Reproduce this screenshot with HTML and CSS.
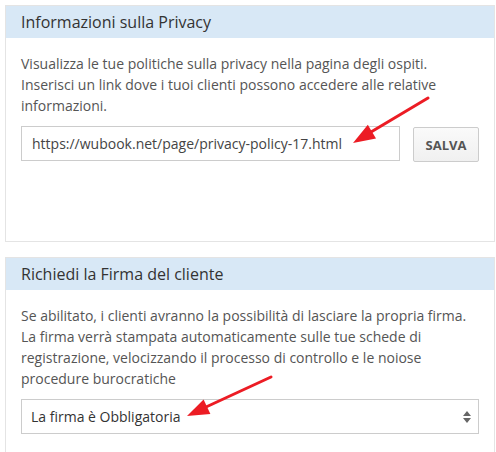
FILE: index.html
```
<!DOCTYPE html>
<html lang="it">

<head>
    <meta charset="UTF-8">
    <title>Impostazioni ospiti</title>
    <link rel="stylesheet" href="styles.css">
</head>

<body>
    <div class="page">
        <section class="panel panel-privacy">
            <h2 class="panel-title">Informazioni sulla Privacy</h2>
            <div class="panel-body">
                <p>Visualizza le tue politiche sulla privacy nella pagina degli ospiti. Inserisci un link dove i tuoi clienti possono accedere alle relative informazioni.</p>
                <div class="input-row">
                    <input class="field" type="text" value="https://wubook.net/page/privacy-policy-17.html">
                    <button class="btn">SALVA</button>
                </div>
            </div>
        </section>

        <section class="panel">
            <h2 class="panel-title">Richiedi la Firma del cliente</h2>
            <div class="panel-body">
                <p>Se abilitato, i clienti avranno la possibilità di lasciare la propria firma. La firma verrà stampata automaticamente sulle tue schede di registrazione, velocizzando il processo di controllo e le noiose procedure burocratiche</p>
                <div class="select-wrap">
                    <select class="field select">
                        <option>La firma è Obbligatoria</option>
                        <option>La firma è Facoltativa</option>
                        <option>Disabilitata</option>
                    </select>
                    <svg class="caret" width="8" height="12" viewBox="0 0 8 12">
                        <path d="M4 0 L8 5 L0 5 Z M0 7 L8 7 L4 12 Z" fill="#666"/>
                    </svg>
                </div>
            </div>
        </section>
    </div>

    <!-- frecce rosse sopra lo screenshot -->
    <svg class="arrows" width="496" height="452" viewBox="0 0 496 452">
        <line x1="428" y1="98" x2="371" y2="132" stroke="#ec1c24" stroke-width="3" stroke-linecap="round"/>
        <polygon points="353,143 367.8,124.8 376,138.6" fill="#ec1c24"/>
        <line x1="271" y1="377" x2="206" y2="407" stroke="#ec1c24" stroke-width="3" stroke-linecap="round"/>
        <polygon points="187,416 203.6,399.4 210.4,414" fill="#ec1c24"/>
    </svg>
</body>

</html>
```

FILE: styles.css
```
* {
    box-sizing: border-box;
}

body {
    margin: 0;
    background-color: #fff;
    font-family: 'Open Sans', 'Liberation Sans', sans-serif;
    position: relative;
    height: 452px;
    overflow: hidden;
}

.page {
    padding: 5px 1px 0 5px;
}

.panel {
    border: 1px solid #e4e4e4;
    margin-bottom: 15px;
}

.panel-privacy {
    min-height: 237px;
}

.panel-title {
    margin: 0;
    height: 32px;
    line-height: 32px;
    padding: 0 15px;
    background-color: #d8e8f6;
    color: #333;
    font-size: 16px;
    font-weight: 400;
}

.panel-body {
    padding: 15px 15px 20px 15px;
}

p {
    margin: 0 0 10px 0;
    font-size: 14px;
    line-height: 21px;
    color: #555;
}

.input-row {
    display: flex;
    gap: 13px;
    align-items: flex-start;
}

.field {
    height: 35px;
    border: 1px solid #ccc;
    border-radius: 0;
    padding: 0 10px;
    font-family: 'Open Sans', 'Liberation Sans', sans-serif;
    font-size: 14px;
    color: #444;
    background-color: #fff;
    outline: none;
}

.input-row .field {
    flex: 1;
}

.btn {
    width: 66px;
    height: 35px;
    margin-top: 1px;
    border: 1px solid #ccc;
    border-radius: 2px;
    background: linear-gradient(#fafafa, #f0f0f0);
    font-family: 'Open Sans', 'Liberation Sans', sans-serif;
    font-size: 13px;
    font-weight: 700;
    color: #555;
    padding: 0;
}

.select-wrap {
    position: relative;
}

.select {
    width: 100%;
    appearance: none;
    -webkit-appearance: none;
    padding-left: 9px;
    color: #333;
}

.caret {
    position: absolute;
    right: 8px;
    top: 12px;
    pointer-events: none;
}

.arrows {
    position: absolute;
    left: 0;
    top: 0;
    pointer-events: none;
}
```
